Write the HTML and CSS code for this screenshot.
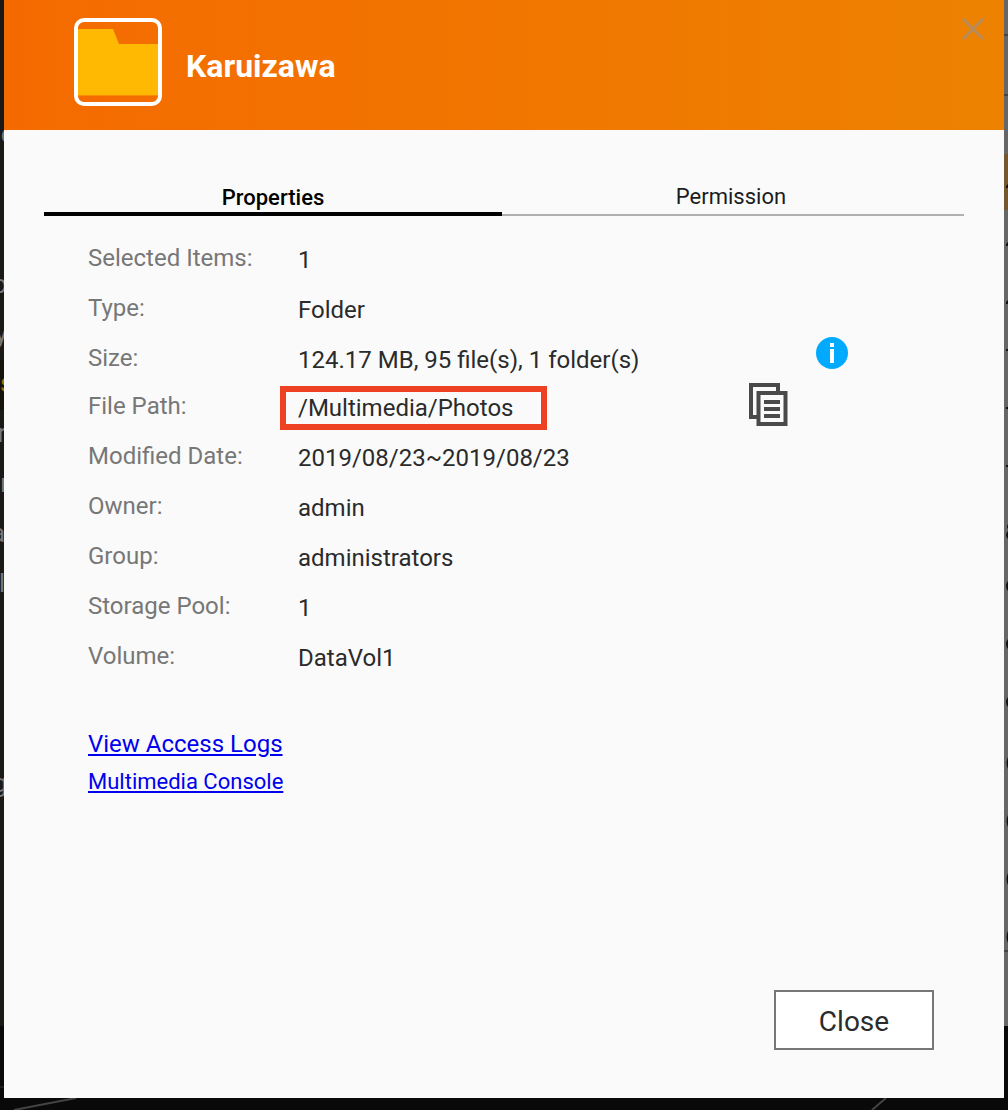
FILE: index.html
```html
<!DOCTYPE html>
<html lang="en">
<head>
<meta charset="utf-8">
<meta name="viewport" content="width=device-width, initial-scale=1">
<title>Karuizawa</title>
<link rel="stylesheet" href="styles.css">
</head>
<body>
<!-- Dimmed desktop behind the dialog -->
<div class="backdrop" aria-hidden="true">
  <svg class="edge edge-left" width="4" height="1110" viewBox="0 0 4 1110">
    <rect width="4" height="1026" fill="#1b1915"/>
    <rect y="360" width="4" height="50" fill="#15110b"/>
    <g font-family="Roboto, sans-serif" font-size="25" fill="#777" text-anchor="end">
      <text x="15" y="143">o</text>
      <text x="7" y="293">o</text>
      <text x="7" y="343">y</text>
      <text x="13" y="392" fill="#a86c08">s</text>
      <text x="6" y="442">r</text>
      <text x="14" y="492">n</text>
      <text x="5" y="542">a</text>
      <text x="5" y="592">l</text>
      <text x="7" y="792">g</text>
    </g>
    <path d="M0 1087h4" stroke="#333"/>
  </svg>
  <svg class="edge edge-right" width="4" height="1110" viewBox="0 0 4 1110">
    <rect width="4" height="1026" fill="#666"/>
    <path d="M0 35h4M0 95h4M0 951h4" stroke="#444" stroke-width="2"/>
    <rect y="154" width="4" height="56" fill="#76582f"/>
    <g fill="#111">
      <path d="M2 188v-2l2-2v4zM2 246v-2l2-2v4zM2 304v-2l2-2v4z"/>
      <path d="M2 349h2v2h-2zM2 407h2v2h-2zM2 465h2v2h-2z"/>
      <path d="M4 524q-2 3 0 5zM4 531q-4 4 0 8zM4 581q-4 5 0 10zM4 639q-4 5 0 10zM4 697q-4 5 0 10zM4 757q-3 6 0 12zM4 815q-3 6 0 12zM4 873q-3 6 0 12zM4 931q-3 6 0 12z"/>
    </g>
  </svg>
  <svg class="floor" height="12" width="1008" viewBox="0 0 1008 12">
    <path d="M14 12L76 0M872 12L886 0" stroke="#444" stroke-width="2" fill="none"/>
  </svg>
</div>

<main class="dialog" role="dialog" aria-labelledby="dialog-title">
  <header class="dialog-header">
    <svg class="folder-icon" width="88" height="88" viewBox="0 0 88 88" aria-hidden="true">
      <path d="M3 11h36l6 15h40v51H3z" fill="#ffb903"/>
      <path d="M4 77.5h80" stroke="#ff8a00"/>
      <rect x="2" y="2" width="84" height="84" rx="8" fill="none" stroke="#fff" stroke-width="4"/>
    </svg>
    <h1 class="dialog-title" id="dialog-title">Karuizawa</h1>
    <button class="dismiss" type="button" aria-label="Dismiss">
      <svg width="22" height="22" viewBox="0 0 22 22" aria-hidden="true"><path d="M1 1l20 20M21 1L1 21" stroke="#b88c5b" stroke-width="3" fill="none"/></svg>
    </button>
  </header>

  <div class="tabs" role="tablist">
    <button class="tab tab-active" type="button" role="tab" aria-selected="true">Properties</button>
    <button class="tab" type="button" role="tab" aria-selected="false">Permission</button>
  </div>

  <dl class="properties">
    <div class="row"><dt>Selected Items:</dt><dd>1</dd></div>
    <div class="row"><dt>Type:</dt><dd>Folder</dd></div>
    <div class="row row-short"><dt>Size:</dt><dd>124.17 MB, 95 file(s), 1 folder(s)</dd>
      <dd class="action action-info"><button class="icon-button" type="button" aria-label="Size information">
        <svg width="32" height="32" viewBox="0 0 32 32" aria-hidden="true"><circle cx="16" cy="16" r="16" fill="#00aaff"/><path d="M14 6h4v4h-4zM14 12h4v14h-4z" fill="#fff"/></svg>
      </button></dd>
    </div>
    <div class="row"><dt>File Path:</dt><dd><span class="highlight">/Multimedia/Photos</span></dd>
      <dd class="action action-copy"><button class="icon-button" type="button" aria-label="Copy path">
        <svg width="40" height="44" viewBox="0 0 40 44" fill="none" stroke="#4a4a4a" stroke-width="4" aria-hidden="true"><path d="M10 35H3V3h27v8"/><rect x="10.500" y="11" width="27" height="31"/><path d="M16 20h16M16 27h16M16 34h16"/></svg>
      </button></dd>
    </div>
    <div class="row"><dt>Modified Date:</dt><dd>2019/08/23~2019/08/23</dd></div>
    <div class="row"><dt>Owner:</dt><dd>admin</dd></div>
    <div class="row"><dt>Group:</dt><dd>administrators</dd></div>
    <div class="row"><dt>Storage Pool:</dt><dd>1</dd></div>
    <div class="row"><dt>Volume:</dt><dd>DataVol1</dd></div>
  </dl>

  <nav class="links">
    <a class="link-large" href="#logs">View Access Logs</a>
    <a href="#console">Multimedia Console</a>
  </nav>

  <footer class="dialog-footer">
    <button class="close" type="button">Close</button>
  </footer>
</main>
</body>
</html>
```
FILE: styles.css
```css
* {
  box-sizing: border-box;
}

body {
  display: flex;
  min-height: 100vh;
  margin: 0;
  padding: 0 4px 12px;
  background: #090909;
  color: #2b2b2b;
  font-family: Roboto, sans-serif;
  font-size: 24px;
  line-height: 32px;
}

button {
  padding: 0;
  border: 0;
  background: none;
  color: inherit;
  font: inherit;
  cursor: pointer;
}

svg {
  display: block;
}

.backdrop {
  position: absolute;
  inset: 0;
  overflow: hidden;
}

.edge,
.floor {
  position: absolute;
}

.edge-left {
  top: 0;
  left: 0;
}

.edge-right {
  top: 0;
  right: 0;
}

.floor {
  bottom: 0;
  left: 0;
}

.dialog {
  position: relative;
  display: flex;
  flex: 1;
  flex-direction: column;
  min-width: 0;
  background: #fafafa;
}

.dialog-header {
  display: flex;
  align-items: flex-start;
  gap: 24px;
  padding: 18px 20px 24px 70px;
  background: linear-gradient(to right, #f56a00, #ed8200);
}

.dialog-title {
  flex: 1;
  margin: 0;
  padding-top: 28px;
  color: #fff;
  font-size: 32px;
  font-weight: 700;
  line-height: 40px;
}

.tabs {
  display: flex;
  margin: 48px 40px 0;
  padding-right: 4px;
  border-bottom: 2px solid #b0b0b0;
}

.tab {
  flex: 1;
  height: 36px;
  padding-top: 2px;
  color: #1c1c1c;
  font-size: 22px;
}

.tab-active {
  height: 38px;
  margin-bottom: -2px;
  padding-top: 4px;
  border-bottom: 4px solid #000;
  color: #000;
  font-weight: 500;
}

.properties {
  margin: 26px 84px 0;
}

.row {
  display: flex;
  height: 50px;
}

.row-short {
  height: 48px;
}

dt {
  width: 210px;
  color: #777;
}

dd {
  margin: 0;
  padding-top: 2px;
}

.action {
  margin-left: auto;
  padding: 0;
}

.action-info {
  padding-right: 72px;
}

.action-copy {
  padding-right: 132px;
}

.icon-button {
  display: block;
  margin-top: -5px;
}

.action-copy .icon-button {
  margin-top: -8px;
}

.highlight {
  display: block;
  margin: -6px 0 0 -18px;
  padding: 0 28px 0 12px;
  border: 6px solid #ee4023;
}

.links {
  display: flex;
  flex-direction: column;
  align-items: flex-start;
  gap: 6px;
  margin: 38px 84px 0;
  font-size: 22px;
}

.link-large {
  font-size: 24px;
}

.links a {
  color: #0000ee;
}

.dialog-footer {
  display: flex;
  justify-content: flex-end;
  margin-top: auto;
  padding: 48px 70px;
}

.close {
  width: 160px;
  height: 60px;
  padding-top: 4px;
  border: 2px solid #777;
  background: #fff;
  font-size: 28px;
}
```
